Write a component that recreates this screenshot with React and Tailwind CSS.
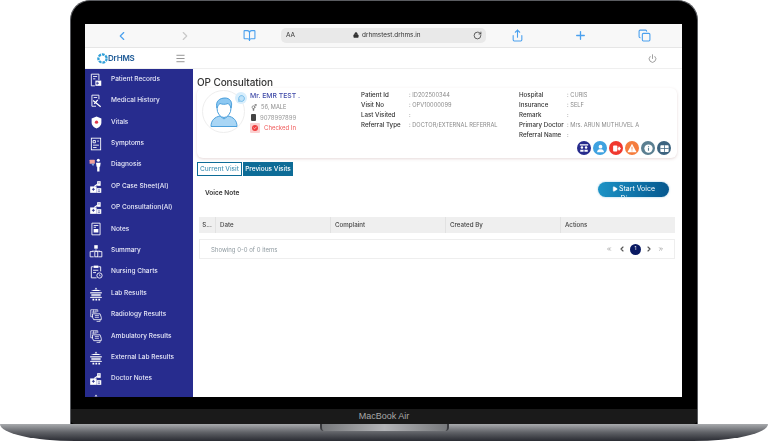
import React from "react";
import {
  ChevronLeft, ChevronRight, BookOpen, Lock, RotateCw, Share, Plus, Copy, Menu, Power,
  MessageCircle, Check, Play, ChevronsLeft, ChevronsRight, VenusAndMars,
} from "lucide-react";

const font = { fontFamily: "Inter, 'Noto Sans', sans-serif" };

const Base = ({ children }) => (
  <svg width="14" height="14" viewBox="0 0 24 24" fill="none" stroke="#fff" strokeWidth="1.5">
    {children}
  </svg>
);

const Records = () => (
  <Base>
    <path d="M4 2 H17 V12 M4 2 V22 H10" />
    <path d="M7 6 H14 M7 10 H11" />
    <rect x="11" y="13" width="10" height="9" fill="#fff" stroke="none" />
    <path d="M14 15 V20 M12.5 17.5 H17" stroke="#272c8e" />
  </Base>
);
const History = () => (
  <Base>
    <path d="M5 2 H17 V9 M5 2 V21 H12" />
    <path d="M8 6 H14" />
    <path d="M7 11 L20 22 M9 17 L15 10" strokeWidth="2.2" />
  </Base>
);
const Vitals = () => (
  <svg width="13" height="13" viewBox="0 0 24 24">
    <path d="M12 1 L21 4.5 V12 C21 18 16 21.5 12 23 C8 21.5 3 18 3 12 V4.5 Z" fill="#fff" />
    <circle cx="12" cy="11.5" r="3" fill="#e0364c" />
  </svg>
);
const Symptoms = () => (
  <Base>
    <rect x="4" y="2" width="16" height="20" />
    <path d="M7 6 H11 V10 H7 Z M14 7 H17 M7 14 H17 M7 18 H13" />
  </Base>
);
const Diagnosis = () => (
  <svg width="14" height="14" viewBox="0 0 24 24">
    <rect x="1" y="3" width="9" height="7" rx="1" fill="#f2a19b" />
    <path d="M4 10 L7 14 L9 10Z" fill="#7fb0ea" />
    <circle cx="16" cy="4" r="2.6" fill="#fff" />
    <path d="M12 8 H20 L19 15 H18 V23 H14 V15 H13 Z" fill="#fff" />
  </svg>
);
const CaseSheet = () => (
  <svg width="14" height="14" viewBox="0 0 24 24" fill="#fff">
    <rect x="2" y="11" width="11" height="11" />
    <rect x="13" y="14" width="8" height="8" />
    <rect x="14" y="2" width="6" height="8" />
    <path d="M5 16 H10 M7.5 13.5 V18.5" stroke="#272c8e" strokeWidth="1.5" />
    <path d="M15 17 H19 M15 19.5 H19 M15.5 5 H18.5" stroke="#272c8e" strokeWidth="1" />
    <path d="M9 11 L15 7" stroke="#fff" strokeWidth="2" />
  </svg>
);
const Notes = () => (
  <Base>
    <path d="M5 2 H19 V22 H5 Z" />
    <path d="M8 6 H16 M8 9 H12" />
    <rect x="8" y="12" width="8" height="6" fill="#fff" stroke="none" />
  </Base>
);
const Summary = () => (
  <Base>
    <rect x="9" y="2" width="6" height="6" fill="#fff" stroke="none" />
    <path d="M2 13 V22 H8 M2 13 H8 M16 13 H22 V22 H16" />
    <rect x="10" y="13" width="5" height="9" />
    <path d="M12 8 V12 M5 12 H19" strokeWidth="1" />
  </Base>
);
const Nursing = () => (
  <Base>
    <path d="M8 3 H4 V22 H13" />
    <path d="M16 3 H20 V11" />
    <rect x="8" y="1" width="8" height="4" fill="#fff" stroke="none" />
    <path d="M7 9 H16 M7 13 H12" />
    <circle cx="18" cy="18" r="4.5" />
    <path d="M18 16 V18.5 H20" strokeWidth="1" />
  </Base>
);
const Lab = () => (
  <svg width="14" height="14" viewBox="0 0 24 24" fill="#fff">
    <path d="M12 1 L14 4 H10 Z" />
    <path d="M3 7 Q12 2 21 7 Z" />
    <rect x="2" y="9" width="20" height="2" />
    <path d="M4 12 H20 V16 H4 Z" opacity="0.75" />
    <rect x="2" y="17" width="20" height="1.6" />
    <path d="M6 20 H9 V23 H6 Z M11 20 H14 V23 H11 Z M16 20 H19 V23 H16 Z" />
  </svg>
);
const Radiology = () => (
  <Base>
    <path d="M3 3 H15 V7 M3 3 V15 H7" strokeWidth="1.2" />
    <path d="M8 3 V8 M12 3 V7 M5 7 H13" strokeWidth="1.2" />
    <path d="M6 10 H19 L21 16 V20 H8 L6 16 Z" strokeWidth="1.4" />
    <path d="M10 13 H17 M10 16 H17" strokeWidth="1.2" />
    <path d="M19 20 V23 H13" strokeWidth="1.2" />
  </Base>
);

const side = [
  ["Patient Records", Records],
  ["Medical History", History],
  ["Vitals", Vitals],
  ["Symptoms", Symptoms],
  ["Diagnosis", Diagnosis],
  ["OP Case Sheet(AI)", CaseSheet],
  ["OP Consultation(AI)", CaseSheet],
  ["Notes", Notes],
  ["Summary", Summary],
  ["Nursing Charts", Nursing],
  ["Lab Results", Lab],
  ["Radiology Results", Radiology],
  ["Ambulatory Results", Radiology],
  ["External Lab Results", Lab],
  ["Doctor Notes", CaseSheet],
  ["", Lab],
];

function Row({ label, value }) {
  return (
    <div className="flex h-[10px] items-center text-[6.2px] leading-none whitespace-nowrap">
      <span className="w-[48px] font-medium text-[#333]">{label}</span>
      <span className="text-[5.7px] text-[#8a8a8a]">: {value}</span>
    </div>
  );
}

const A = {
  team: (
    <svg width="10" height="10" viewBox="0 0 24 24" fill="#fff">
      <rect x="2" y="3" width="20" height="3" />
      <circle cx="7" cy="11" r="3" />
      <circle cx="17" cy="11" r="3" />
      <path d="M3 21 V16 H11 V21 Z M13 21 V16 H21 V21 Z" />
    </svg>
  ),
  user: (
    <svg width="9" height="9" viewBox="0 0 24 24" fill="#fff">
      <circle cx="12" cy="7" r="5" />
      <path d="M3 22 C3 15 8 14 12 14 C16 14 21 15 21 22 Z" />
    </svg>
  ),
  exit: (
    <svg width="9" height="9" viewBox="0 0 24 24" fill="#fff">
      <rect x="3" y="4" width="11" height="16" rx="2" />
      <path d="M15 9 H18 V5 L24 12 L18 19 V15 H15 Z" />
    </svg>
  ),
  warn: (
    <svg width="10" height="10" viewBox="0 0 24 24">
      <path d="M12 2 L23 22 H1 Z" fill="#fff" />
      <path d="M12 9 V16 M12 18 V20" stroke="#f57c3d" strokeWidth="2" />
    </svg>
  ),
  info: (
    <svg width="9" height="9" viewBox="0 0 24 24">
      <circle cx="12" cy="12" r="11" fill="#fff" />
      <path d="M12 6 V8 M12 10 V18" stroke="#5b7f91" strokeWidth="3" />
    </svg>
  ),
  grid: (
    <svg width="9" height="9" viewBox="0 0 24 24">
      <rect x="1" y="3" width="22" height="18" rx="2" fill="#fff" />
      <path d="M12 3 V21 M1 12 H23" stroke="#3d6480" strokeWidth="2" />
    </svg>
  ),
};

const actions = [
  ["bg-[#262b8c]", A.team],
  ["bg-[#3fa2e0]", A.user],
  ["bg-[#f0382f]", A.exit],
  ["bg-[#f57c3d]", A.warn],
  ["bg-[#5b7f91]", A.info],
  ["bg-[#3d6480]", A.grid],
];

export default function App() {
  return (
    <div className="relative h-[441px] w-[768px] overflow-hidden bg-white" style={font}>
      {/* lid */}
      <div className="mx-[70px] flex h-[424px] w-[628px] flex-col rounded-t-[20px] border-x border-t border-[#5a5c60] bg-black">
        <div className="ml-[14px] mt-[23px] flex h-[373px] w-[597px] flex-col overflow-hidden bg-white blur-[0.4px]">
          {/* browser bar */}
          <div className="relative flex h-[24px] shrink-0 items-center border-b border-[#e6e6e6] bg-[#f8f8f8] text-[#4aa0ee]">
            <ChevronLeft className="ml-[30px] h-[14px] w-[14px]" strokeWidth={2} />
            <ChevronRight className="ml-[49px] h-[14px] w-[14px] text-[#c9c9c9]" strokeWidth={2} />
            <BookOpen className="ml-[51px] h-[13px] w-[13px]" strokeWidth={2} />
            <div className="ml-[25px] flex h-[15px] w-[205px] items-center rounded-[5px] bg-[#e9e9e9] pl-[5px] pr-[4px] text-[#333]">
              <span className="text-[6.5px]">AA</span>
              <div className="ml-[58px] flex items-center gap-[3px]">
                <Lock className="h-[6px] w-[6px]" fill="#333" />
                <span className="text-[6.4px]">drhmstest.drhms.in</span>
              </div>
              <RotateCw className="ml-auto h-[9px] w-[9px]" />
            </div>
            <Share className="ml-[25px] h-[13px] w-[13px]" strokeWidth={2} />
            <Plus className="ml-[50px] h-[13px] w-[13px]" strokeWidth={2.4} />
            <Copy className="ml-[51px] h-[13px] w-[13px]" strokeWidth={2} />
          </div>
          {/* app header */}
          <div className="flex h-[21px] shrink-0 items-center border-b border-[#efefef] bg-white pl-[12px]">
            <svg width="11" height="11" viewBox="0 0 24 24" fill="none" stroke="#2f9fd8" strokeWidth="5" strokeDasharray="6 2">
              <circle cx="12" cy="12" r="9" />
            </svg>
            <span className="text-[8px] font-semibold tracking-tight text-[#1e5a96]">DrHMS</span>
            <Menu className="ml-[40px] h-[11px] w-[11px] text-[#8c8c8c]" />
            <Power className="ml-auto mr-[25px] h-[9px] w-[9px] text-[#808080]" />
          </div>
          <div className="flex min-h-0 flex-1">
            {/* sidebar */}
            <div className="w-[108px] shrink-0 overflow-hidden bg-[#272c8e]">
              {side.map(([name, Icon], i) => (
                <div key={i} className="flex h-[21.4px] items-center text-white">
                  <div className="mr-[4px] flex w-[22px] shrink-0 items-center justify-center">
                    <Icon />
                  </div>
                  <span className="text-[6.5px] font-medium whitespace-nowrap text-[#e8e9f8]">{name}</span>
                </div>
              ))}
            </div>
            {/* main */}
            <div className="min-w-0 flex-1 bg-white pl-[4px] pr-[5px]">
              <h1 className="mt-[7px] h-[12px] text-[10px] leading-[13px] font-medium tracking-[-0.1px] text-[#333]">OP Consultation</h1>
              {/* patient card */}
              <div className="relative flex h-[70px] rounded-[6px] bg-white shadow-[0_1px_3px_rgba(170,130,130,0.3)]">
                <div className="relative ml-[5px] mt-[2px] flex h-[43px] w-[43px] shrink-0 items-center justify-center rounded-full border border-[#eeeeee]">
                  <svg width="28" height="30" viewBox="0 0 28 30" fill="none" stroke="#4ca0dc" strokeWidth="1">
                    <path d="M1 29.5 C1 23 5 20 10 19 L14 22 L18 19 C23 20 27 23 27 29.5 Z" fill="#a9d6f5" />
                    <ellipse cx="14" cy="11" rx="7" ry="9.5" fill="#fff" />
                    <path d="M7 11 C5 4 10 1 15 1 C20 1 23 5 21 11 C20 8 19 7 18 6.5 C15 8 11 7 10 6.5 C8 8 8 9 7 11Z" fill="#8cc8f2" />
                  </svg>
                  <div className="absolute right-[-3px] top-[1px] flex h-[12px] w-[12px] items-center justify-center rounded-full bg-[#d8eefc]">
                    <MessageCircle className="h-[7px] w-[7px] text-[#3fa2e0]" fill="#bfe2f8" />
                  </div>
                </div>
                <div className="ml-[5px] mt-[3px] w-[111px] shrink-0 whitespace-nowrap">
                  <div className="text-[6.8px] leading-[10px] font-medium text-[#3f4aa8]">Mr. EMR TEST .</div>
                  <div className="mt-[1px] flex h-[10px] items-center gap-[4px] text-[5.6px] text-[#8a8a8a]">
                    <VenusAndMars className="h-[7px] w-[7px] text-[#555]" />
                    <span>56, MALE</span>
                  </div>
                  <div className="flex h-[10px] items-center gap-[4px] pl-[1px] text-[6px] text-[#9a9a9a]">
                    <span className="h-[7px] w-[5px] rounded-[1px] bg-[#444]" />
                    <span>9078997899</span>
                  </div>
                  <div className="flex h-[11px] items-center gap-[4px] text-[6px] text-[#f05a5a]">
                    <span className="flex h-[10px] w-[10px] items-center justify-center rounded-[1px] bg-[#fbd0d0]">
                      <span className="flex h-[6px] w-[6px] items-center justify-center rounded-full bg-[#ef3e3e]">
                        <Check className="h-[4px] w-[4px] text-white" strokeWidth={4} />
                      </span>
                    </span>
                    <span>Checked In</span>
                  </div>
                </div>
                <div className="mt-[2px] w-[158px] shrink-0">
                  <Row label="Patient Id" value="ID202500344" />
                  <Row label="Visit No" value="OPV10000099" />
                  <Row label="Last Visited" value="" />
                  <Row label="Referral Type" value="DOCTOR/EXTERNAL REFERRAL" />
                </div>
                <div className="mt-[2px] flex-1">
                  <Row label="Hospital" value="CURIS" />
                  <Row label="Insurance" value="SELF" />
                  <Row label="Remark" value="" />
                  <Row label="Primary Doctor" value="Mrs. ARUN MUTHUVEL A" />
                  <Row label="Referral Name" value="" />
                </div>
                <div className="absolute bottom-[3px] right-[6px] flex gap-[2px]">
                  {actions.map(([bg, icon], i) => (
                    <span key={i} className={`flex h-[14px] w-[14px] items-center justify-center rounded-full ${bg}`}>
                      {icon}
                    </span>
                  ))}
                </div>
              </div>
              {/* tabs */}
              <div className="mt-[4px] flex h-[14px] gap-[1px] text-[6.5px] font-medium">
                <div className="flex w-[45px] items-center justify-center border border-[#0d6c97] pt-[1px] whitespace-nowrap text-[#4a97b8]">Current Visit</div>
                <div className="flex w-[50px] items-center justify-center bg-[#0d6c97] pt-[1px] whitespace-nowrap text-white">Previous Visits</div>
              </div>
              {/* voice note */}
              <div className="mt-[6px] flex h-[15px] justify-between pl-[8px] pr-[8px]">
                <span className="pt-[7px] text-[6.5px] font-semibold text-[#333]">Voice Note</span>
                <div className="h-[15px] w-[71px] overflow-hidden rounded-full bg-gradient-to-r from-[#1c93c6] to-[#06588f] text-center text-[7px] leading-[10px] text-white shadow-[0_0_2px_rgba(30,140,200,0.5)]">
                  <div className="mt-[2px] flex items-center justify-center gap-[1px]">
                    <Play className="h-[6px] w-[6px]" fill="#fff" />
                    <span>Start Voice</span>
                  </div>
                  <div>Discuss</div>
                </div>
              </div>
              {/* table */}
              <div className="ml-[2px] mr-[2px] mt-[20px] grid h-[16px] grid-cols-[17px_115px_115px_115px_1fr] items-center bg-[#efefef] text-[6.2px] font-medium text-[#444]">
                <div className="flex h-full items-center justify-center border-r border-[#e2e2e2]">S...</div>
                <div className="flex h-full items-center border-r border-[#e2e2e2] pl-[4px]">Date</div>
                <div className="flex h-full items-center border-r border-[#e2e2e2] pl-[4px]">Complaint</div>
                <div className="flex h-full items-center border-r border-[#e2e2e2] pl-[4px]">Created By</div>
                <div className="flex h-full items-center pl-[4px]">Actions</div>
              </div>
              <div className="ml-[2px] mr-[2px] mt-[6px] flex h-[20px] items-center border border-[#eeeeee] pl-[11px] pr-[10px]">
                <span className="text-[6px] text-[#8f9aa0]">Showing 0-0 of 0 items</span>
                <div className="ml-auto flex items-center text-[#555]">
                  <ChevronsLeft className="h-[6px] w-[6px] text-[#999]" strokeWidth={3} />
                  <ChevronLeft className="ml-[6px] h-[8px] w-[8px]" strokeWidth={3.5} />
                  <span className="ml-[4px] flex h-[11px] w-[11px] items-center justify-center rounded-full bg-[#0a1a63] text-[5px] text-white">1</span>
                  <ChevronRight className="ml-[4px] h-[8px] w-[8px]" strokeWidth={3.5} />
                  <ChevronsRight className="ml-[5px] h-[6px] w-[6px] text-[#999]" strokeWidth={3} />
                </div>
              </div>
            </div>
          </div>
        </div>
        {/* chin */}
        <div className="mt-[12px] flex flex-1 items-center justify-center rounded-b-[4px] bg-[#1a1a1a] text-[9px] text-[#a8a8a8]" style={{ fontFamily: "'Liberation Sans', sans-serif" }}>MacBook Air</div>
      </div>
      {/* base */}
      <div className="relative h-[17px] w-[768px] rounded-bl-[75px_17px] rounded-br-[75px_17px] bg-gradient-to-b from-[#a9abae] via-[#5f6166] to-[#2a2c33]">
        <div className="absolute left-[320px] top-0 h-[7px] w-[129px] rounded-b-[4px] border-x-2 border-[#3a3b3f] bg-gradient-to-r from-[#77797c] via-[#b4b5b8] to-[#77797c]" />
      </div>
    </div>
  );
}
